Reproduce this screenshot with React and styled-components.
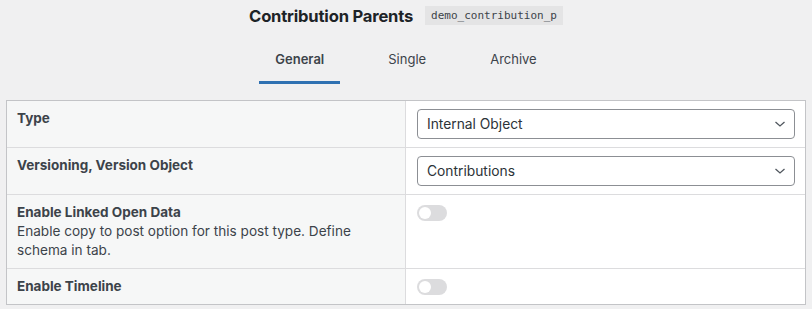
import React, { useState } from "react";
import styled, { createGlobalStyle } from "styled-components";

const GlobalStyle = createGlobalStyle`
  html, body {
    margin: 0;
    padding: 0;
    background: #f0f0f1;
    font-family: Inter, "Liberation Sans", Arial, sans-serif;
    color: #1d2327;
  }
`;

const Page = styled.div`
  width: 812px;
  height: 309px;
  overflow: hidden;
  background: #f0f0f1;
`;

const Header = styled.div`
  display: flex;
  align-items: center;
  justify-content: center;
  gap: 12px;
  height: 31px;
`;

const Title = styled.h1`
  margin: 0;
  font-size: 16.6px;
  font-weight: 700;
  color: #1d2327;
  letter-spacing: -0.2px;
`;

const Slug = styled.code`
  display: inline-block;
  background: #e4e4e5;
  font-family: "DejaVu Sans Mono", "Liberation Mono", monospace;
  font-size: 11px;
  line-height: 19px;
  padding: 0 6px;
  color: #3c434a;
`;

const Tabs = styled.div`
  display: flex;
  justify-content: center;
  gap: 32px;
  margin-top: 11px;
`;

const Tab = styled.button`
  display: block;
  border: 0;
  background: none;
  padding: 9px 16px 14px;
  line-height: 16px;
  font-family: inherit;
  font-size: 13px;
  font-weight: ${(p) => (p.active ? 600 : 400)};
  color: #3c434a;
  border-bottom: 3px solid ${(p) => (p.active ? "#2f71b2" : "transparent")};
  cursor: pointer;
`;

const Table = styled.div`
  margin: 16px 6px 0;
  border: 1px solid #c3c4c7;
  background: #fff;
`;

const Row = styled.div`
  display: grid;
  grid-template-columns: 399px 1fr;
  border-top: ${(p) => (p.first ? "0" : "1px solid #dcdcde")};
`;

const LabelCell = styled.div`
  background: #f6f7f7;
  border-right: 1px solid #dcdcde;
  padding: 8px 10px;
`;

const ValueCell = styled.div`
  padding: 8px 10px 8px 11px;
`;

const Label = styled.div`
  font-size: 13.5px;
  font-weight: 650;
  line-height: 19px;
  color: #3c434a;
`;

const Desc = styled.div`
  font-size: 13.6px;
  line-height: 19px;
  color: #3c434a;
  padding-right: 20px;
`;

const SelectBox = styled.div`
  position: relative;
  display: flex;
  align-items: center;
  height: 30px;
  box-sizing: border-box;
  width: 378px;
  border: 1px solid #8c8f94;
  border-radius: 4px;
  padding: 0 24px 0 9px;
  font-size: 13.8px;
  color: #2c3338;
  background: #fff;
`;

const Chevron = styled.svg`
  position: absolute;
  right: 8px;
  top: 50%;
  transform: translateY(-50%);
`;

const Toggle = styled.button`
  display: block;
  width: 30px;
  height: 16px;
  border: 0;
  border-radius: 8px;
  background: ${(p) => (p.on ? "#2271b1" : "#dcdcde")};
  padding: 2px;
  margin-top: 2px;
  cursor: pointer;
  box-sizing: border-box;
`;

const Knob = styled.span`
  display: block;
  width: 12px;
  height: 12px;
  border-radius: 50%;
  background: #fff;
  margin-left: ${(p) => (p.on ? "14px" : "0")};
`;

function Select({ value }) {
  return (
    <SelectBox>
      {value}
      <Chevron width="12" height="8" viewBox="0 0 12 8">
        <path d="M1.5 2l4.5 4 4.5-4" fill="none" stroke="#50575e" strokeWidth="1.3" />
      </Chevron>
    </SelectBox>
  );
}

function Switch() {
  const [on, setOn] = useState(false);
  return (
    <Toggle on={on ? 1 : 0} onClick={() => setOn(!on)}>
      <Knob on={on ? 1 : 0} />
    </Toggle>
  );
}

export default function App() {
  const [tab, setTab] = useState("General");

  return (
    <Page>
      <GlobalStyle />
      <Header>
        <Title>Contribution Parents</Title>
        <Slug>demo_contribution_p</Slug>
      </Header>
      <Tabs>
        {["General", "Single", "Archive"].map((t) => (
          <Tab key={t} active={tab === t ? 1 : 0} onClick={() => setTab(t)}>
            {t}
          </Tab>
        ))}
      </Tabs>
      <Table>
        <Row first>
          <LabelCell>
            <Label>Type</Label>
          </LabelCell>
          <ValueCell>
            <Select value="Internal Object" />
          </ValueCell>
        </Row>
        <Row>
          <LabelCell>
            <Label>Versioning, Version Object</Label>
          </LabelCell>
          <ValueCell>
            <Select value="Contributions" />
          </ValueCell>
        </Row>
        <Row>
          <LabelCell>
            <Label>Enable Linked Open Data</Label>
            <Desc>Enable copy to post option for this post type. Define schema in tab.</Desc>
          </LabelCell>
          <ValueCell>
            <Switch />
          </ValueCell>
        </Row>
        <Row>
          <LabelCell>
            <Label>Enable Timeline</Label>
          </LabelCell>
          <ValueCell>
            <Switch />
          </ValueCell>
        </Row>
      </Table>
    </Page>
  );
}
